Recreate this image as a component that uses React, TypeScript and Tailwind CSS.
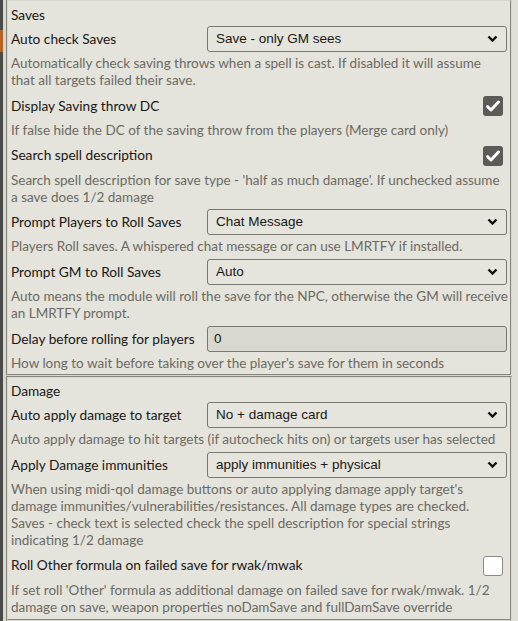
import React from 'react';

type Setting =
  | { kind: 'select'; label: string; value: string; hint: string[] }
  | { kind: 'check'; label: string; checked: boolean; hint: string[] }
  | { kind: 'input'; label: string; value: string; hint: string[] };

const saves: Setting[] = [
  {
    kind: 'select',
    label: 'Auto check Saves',
    value: 'Save - only GM sees',
    hint: [
      'Automatically check saving throws when a spell is cast. If disabled it will assume',
      'that all targets failed their save.',
    ],
  },
  {
    kind: 'check',
    label: 'Display Saving throw DC',
    checked: true,
    hint: ['If false hide the DC of the saving throw from the players (Merge card only)'],
  },
  {
    kind: 'check',
    label: 'Search spell description',
    checked: true,
    hint: [
      "Search spell description for save type - 'half as much damage'. If unchecked assume",
      'a save does 1/2 damage',
    ],
  },
  {
    kind: 'select',
    label: 'Prompt Players to Roll Saves',
    value: 'Chat Message',
    hint: ['Players Roll saves. A whispered chat message or can use LMRTFY if installed.'],
  },
  {
    kind: 'select',
    label: 'Prompt GM to Roll Saves',
    value: 'Auto',
    hint: [
      'Auto means the module will roll the save for the NPC, otherwise the GM will receive',
      'an LMRTFY prompt.',
    ],
  },
  {
    kind: 'input',
    label: 'Delay before rolling for players',
    value: '0',
    hint: ["How long to wait before taking over the player's save for them in seconds"],
  },
];

const damage: Setting[] = [
  {
    kind: 'select',
    label: 'Auto apply damage to target',
    value: 'No + damage card',
    hint: ['Auto apply damage to hit targets (if autocheck hits on) or targets user has selected'],
  },
  {
    kind: 'select',
    label: 'Apply Damage immunities',
    value: 'apply immunities + physical',
    hint: [
      "When using midi-qol damage buttons or auto applying damage apply target's",
      'damage immunities/vulnerabilities/resistances. All damage types are checked.',
      'Saves - check text is selected check the spell description for special strings',
      'indicating 1/2 damage',
    ],
  },
  {
    kind: 'check',
    label: 'Roll Other formula on failed save for rwak/mwak',
    checked: false,
    hint: [
      "If set roll 'Other' formula as additional damage on failed save for rwak/mwak. 1/2",
      'damage on save, weapon properties noDamSave and fullDamSave override',
    ],
  },
];

function Chevron() {
  return (
    <svg width="11" height="8" viewBox="0 0 11 8" className="shrink-0">
      <polyline points="1.5,1.5 5.5,5.5 9.5,1.5" fill="none" stroke="#111" strokeWidth="2.4" />
    </svg>
  );
}

function Control({ s }: { s: Setting }) {
  if (s.kind === 'select') {
    return (
      <div className="w-[300px] h-[26px] flex items-center justify-between pl-[8px] pr-[8px] border border-[#7a7971] rounded-[3px] bg-[#e6e5de]/60 font-['Liberation_Sans',Arial,sans-serif] text-[13.5px] text-[#191813]">
        <span>{s.value}</span>
        <Chevron />
      </div>
    );
  }
  if (s.kind === 'input') {
    return (
      <div className="w-[300px] h-[26px] flex items-center pl-[6px] border border-[#7a7971] rounded-[3px] bg-black/5 font-['Liberation_Sans',Arial,sans-serif] text-[13.5px] text-[#191813]">
        {s.value}
      </div>
    );
  }
  return (
    <div className="flex justify-end pr-[4px]">
      {s.checked ? (
        <div className="w-[20px] h-[20px] rounded-[3px] bg-[#5c5b57] flex items-center justify-center">
          <svg width="14" height="12" viewBox="0 0 14 12">
            <path d="M1.5 6.5 L5 10 L12.5 2" fill="none" stroke="#fff" strokeWidth="3" strokeLinecap="round" strokeLinejoin="round" />
          </svg>
        </div>
      ) : (
        <div className="w-[20px] h-[20px] rounded-[3px] bg-white border border-[#8a8983]" />
      )}
    </div>
  );
}

function Row({ s }: { s: Setting }) {
  return (
    <div className="flex flex-col">
      <div className="flex items-center h-[26px]">
        <div className="flex-1 whitespace-nowrap text-[13.7px] text-[#191813]">{s.label}</div>
        <Control s={s} />
      </div>
      <div className="mt-[3px] mb-[3.8px] whitespace-nowrap text-[13.5px] leading-[17px] text-[#6b6a62]">
        {s.hint.map((h) => (
          <div key={h}>{h}</div>
        ))}
      </div>
    </div>
  );
}

function Section({ title, items, className }: { title: string; items: Setting[]; className?: string }) {
  return (
    <div
      className={
        'border-2 [border-style:groove] border-[#d9d8cc] pl-[3px] pr-[3px] flex flex-col overflow-hidden ' +
        (className ?? '')
      }
    >
      <div className="h-[22px] shrink-0 flex items-center text-[13.7px] text-[#191813]">{title}</div>
      {items.map((s) => (
        <Row key={s.label} s={s} />
      ))}
    </div>
  );
}

export default function App() {
  return (
    <div className="w-[518px] h-[621px] overflow-hidden flex bg-[#e2e1da] font-['Lato','Open_Sans',sans-serif]">
      <div className="w-[6px] flex">
        <div className="w-[3px] flex flex-col bg-[#4a4a48]">
          <div className="h-[30px]" />
          <div className="h-[22px] bg-[#b9641d]" />
        </div>
        <div className="flex-1 bg-[#d8d7cf]" />
      </div>
      <div className="w-[506px] flex flex-col bg-[#e4e3dc]">
        <Section title="Saves" items={saves} className="-mt-[1px] pt-[3px] h-[377px] shrink-0" />
        <Section title="Damage" items={damage} className="pt-[2px] flex-1" />
      </div>
      <div className="flex-1 bg-[#e0dfd8]" />
    </div>
  );
}
